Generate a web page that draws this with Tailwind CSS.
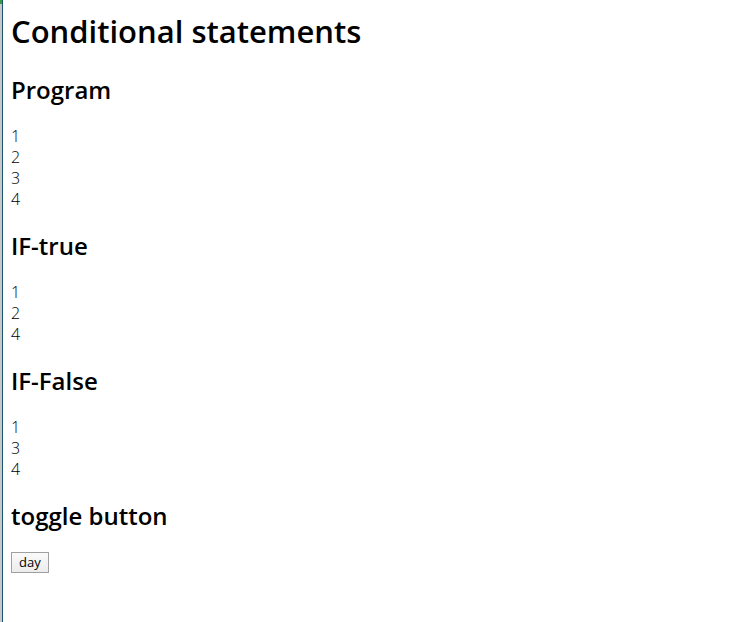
<!DOCTYPE html>
<html lang="en">
<head>
<meta charset="utf-8">
<title>Conditional statements</title>
<script src="https://cdn.jsdelivr.net/npm/@tailwindcss/browser@4"></script>
</head>
<body class="flex min-h-screen bg-white font-['Open_Sans',sans-serif] text-base leading-[21px] text-black">
<div class="w-[3px] shrink-0 border-r border-[#1c5570] bg-[#c8c8c8]" aria-hidden="true"><div class="h-1 bg-[#3c9a3c]"></div></div>
<main class="grow px-2 pt-2.5">
<h1 class="text-[31px] leading-[43px] font-semibold">Conditional statements</h1>
<h2 class="mt-5 text-2xl leading-[33px] font-semibold">Program</h2>
<div class="mt-5 font-light">1<br>2<br>3<br>4</div>
<h2 class="mt-5 text-2xl leading-[32px] font-semibold">IF-true</h2>
<div class="mt-5 font-light">1<br>2<br>4</div>
<h2 class="mt-5 text-2xl leading-[32px] font-semibold">IF-False</h2>
<div class="mt-5 font-light">1<br>3<br>4</div>
<h2 class="mt-5 text-2xl leading-[32px] font-semibold">toggle button</h2>
<button type="button" class="mt-5 border border-[#a0a0a0] bg-linear-to-b from-[#fafafa] to-[#ececec] px-[7px] text-[13px] leading-[19px]">day</button>
</main>
</body>
</html>
